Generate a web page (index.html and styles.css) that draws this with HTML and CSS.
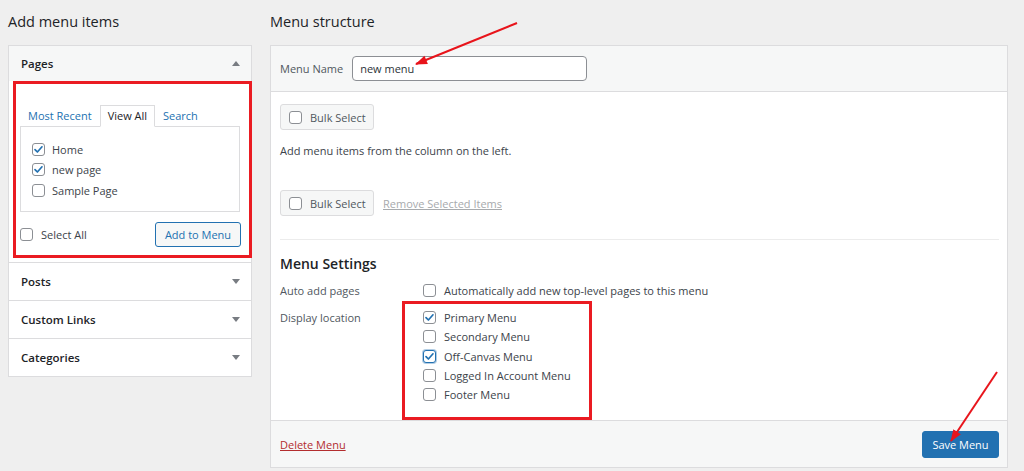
FILE: index.html
```html
<!DOCTYPE html>
<html lang="en">
<head>
<meta charset="utf-8">
<title>Menus</title>
<link rel="stylesheet" href="styles.css">
</head>
<body>
<div class="page">
  <div class="col-left">
    <h2 class="col-title">Add menu items</h2>
    <div class="accordion">
      <div class="acc-section open">
        <div class="acc-head"><span>Pages</span><span class="tri up"></span></div>
        <div class="acc-body highlight">
          <div class="tabs">
            <span class="tab">Most Recent</span>
            <span class="tab active">View All</span>
            <span class="tab">Search</span>
          </div>
          <div class="tab-panel">
            <div class="cb-row"><span class="cb checked"><svg viewBox="0 0 13 13"><path d="M3 6.6 L5.4 9 L10 3.8"/></svg></span>Home</div>
            <div class="cb-row"><span class="cb checked"><svg viewBox="0 0 13 13"><path d="M3 6.6 L5.4 9 L10 3.8"/></svg></span>new page</div>
            <div class="cb-row"><span class="cb"></span>Sample Page</div>
          </div>
          <div class="acc-actions">
            <div class="cb-row select-all"><span class="cb"></span>Select All</div>
            <button class="btn-secondary">Add to Menu</button>
          </div>
        </div>
      </div>
      <div class="acc-section"><div class="acc-head"><span>Posts</span><span class="tri down"></span></div></div>
      <div class="acc-section"><div class="acc-head"><span>Custom Links</span><span class="tri down"></span></div></div>
      <div class="acc-section"><div class="acc-head"><span>Categories</span><span class="tri down"></span></div></div>
    </div>
  </div>

  <div class="col-right">
    <h2 class="col-title">Menu structure</h2>
    <div class="menu-box">
      <div class="menu-header">
        <span class="name-label">Menu Name</span>
        <div class="name-input">new menu</div>
      </div>
      <div class="menu-body">
        <div class="bulk">
          <button class="bulk-btn"><span class="cb"></span>Bulk Select</button>
        </div>
        <p class="hint">Add menu items from the column on the left.</p>
        <div class="bulk bulk-2">
          <button class="bulk-btn"><span class="cb"></span>Bulk Select</button>
          <a class="remove">Remove Selected Items</a>
        </div>
        <div class="divider"></div>
        <h3 class="settings-title">Menu Settings</h3>
        <div class="setting-row auto">
          <span class="setting-label">Auto add pages</span>
          <div class="setting-value">
            <div class="cb-row wide"><span class="cb"></span>Automatically add new top-level pages to this menu</div>
          </div>
        </div>
        <div class="setting-row display">
          <span class="setting-label">Display location</span>
          <div class="setting-value locations highlight">
            <div class="loc-row"><span class="cb checked"><svg viewBox="0 0 13 13"><path d="M3 6.6 L5.4 9 L10 3.8"/></svg></span>Primary Menu</div>
            <div class="loc-row"><span class="cb"></span>Secondary Menu</div>
            <div class="loc-row"><span class="cb checked focus"><svg viewBox="0 0 13 13"><path d="M3 6.6 L5.4 9 L10 3.8"/></svg></span>Off-Canvas Menu</div>
            <div class="loc-row"><span class="cb"></span>Logged In Account Menu</div>
            <div class="loc-row"><span class="cb"></span>Footer Menu</div>
          </div>
        </div>
      </div>
      <div class="menu-footer">
        <a class="delete">Delete Menu</a>
        <button class="btn-primary">Save Menu</button>
      </div>
    </div>
  </div>

  <svg class="arrows" viewBox="0 0 1024 471" width="1024" height="471">
    <defs>
      <marker id="ah" viewBox="0 0 12 10" refX="11" refY="5" markerWidth="13" markerHeight="10" orient="auto" markerUnits="userSpaceOnUse">
        <path d="M0 0.5 L12 5 L0 9.5 z" fill="#e8141b"/>
      </marker>
    </defs>
    <line x1="517" y1="23" x2="416" y2="64" stroke="#e8141b" stroke-width="2" marker-end="url(#ah)"/>
    <line x1="997" y1="372" x2="951" y2="441" stroke="#e8141b" stroke-width="2" marker-end="url(#ah)"/>
  </svg>
</div>
</body>
</html>
```

FILE: styles.css
```css
html, body {
  margin: 0;
  padding: 0;
}

body {
  background: #efefef;
  font-family: "Open Sans", "Noto Sans", sans-serif;
  font-size: 11px;
  color: #3c434a;
}

.page {
  position: relative;
  display: flex;
  gap: 18px;
  padding: 0 16px 0 8px;
  height: 471px;
  box-sizing: border-box;
  overflow: hidden;
}

.col-left {
  width: 244px;
  flex: none;
}

.col-right {
  flex: 1;
  min-width: 0;
}

.col-title {
  font-size: 14.5px;
  font-weight: 400;
  color: #1d2327;
  line-height: 20px;
  margin: 12px 0 13px;
}

/* ---------- accordion ---------- */
.accordion {
  background: #fff;
  border: 1px solid #dcdcde;
}

.acc-head {
  display: flex;
  justify-content: space-between;
  align-items: center;
  box-sizing: border-box;
  height: 38px;
  padding: 0 11px 0 12px;
  font-weight: 600;
  font-size: 11.5px;
  color: #1d2327;
  border-top: 1px solid #dcdcde;
}

.acc-section.open .acc-head {
  height: 35px;
  background: #f6f7f7;
  border-top: 0;
}

.tri {
  width: 0;
  height: 0;
  border-left: 4px solid transparent;
  border-right: 4px solid transparent;
}

.tri.down {
  border-top: 5px solid #787c82;
}

.tri.up {
  border-bottom: 5px solid #787c82;
}

.highlight {
  border: 3px solid #ea1b22;
}

.acc-body {
  margin: 0 -1px 4px 4px;
  padding: 21px 8px 8px 4px;
}

.tabs {
  display: flex;
  margin-bottom: -1px;
  position: relative;
  z-index: 1;
}

.tab {
  padding: 0 7px;
  border: 1px solid transparent;
  line-height: 20px;
  color: #2271b1;
}

.tab.active {
  border-color: #dcdcde;
  border-bottom-color: #fff;
  background: #fff;
  color: #1d2327;
}

.tab-panel {
  border: 1px solid #dcdcde;
  padding: 12px 11px 10px;
  margin-right: 1px;
}

.cb-row {
  display: flex;
  align-items: center;
  gap: 7px;
  height: 20.5px;
  color: #3c434a;
  white-space: nowrap;
}

.cb {
  width: 13px;
  height: 13px;
  flex: none;
  box-sizing: border-box;
  border: 1px solid #8c8f94;
  border-radius: 3px;
  background: #fff;
  display: inline-flex;
  align-items: center;
  justify-content: center;
}

.cb svg {
  width: 13px;
  height: 13px;
  flex: none;
}

.cb svg path {
  fill: none;
  stroke: #2271b1;
  stroke-width: 1.7;
  stroke-linecap: round;
  stroke-linejoin: round;
}

.cb.focus {
  border-color: #2271b1;
  box-shadow: 0 0 0 1px rgba(34, 113, 177, 0.35);
}

.acc-actions {
  display: flex;
  justify-content: space-between;
  align-items: center;
  margin-top: 10px;
}

.select-all {
  gap: 8px;
}

.btn-secondary {
  width: 86px;
  height: 25px;
  box-sizing: border-box;
  border: 1px solid #2271b1;
  border-radius: 3px;
  background: #f6f7f7;
  color: #2271b1;
  font: inherit;
  padding: 0;
}

/* ---------- menu structure ---------- */
.menu-box {
  background: #fff;
  border: 1px solid #dcdcde;
}

.menu-header {
  height: 45px;
  display: flex;
  align-items: center;
  padding-left: 9px;
  background: #f6f7f7;
  border-bottom: 1px solid #dcdcde;
}

.name-label {
  color: #50575e;
  margin-right: 9px;
}

.name-input {
  width: 235px;
  height: 25px;
  box-sizing: border-box;
  border: 1px solid #8c8f94;
  border-radius: 4px;
  padding: 0 7px;
  line-height: 23px;
  color: #2c3338;
  background: #fff;
}

.menu-body {
  padding: 12px 8px 0 9px;
}

.bulk {
  display: flex;
  align-items: center;
  gap: 9px;
}

.bulk-btn {
  display: flex;
  align-items: center;
  gap: 8px;
  height: 26px;
  width: 94px;
  padding: 0 8px;
  box-sizing: border-box;
  border: 1px solid #dcdcde;
  border-radius: 3px;
  background: #f6f7f7;
  color: #50575e;
  font: inherit;
  white-space: nowrap;
}

.hint {
  margin: 11px 0 0;
  line-height: 19px;
}

.bulk-2 {
  margin-top: 30px;
}

.remove {
  color: #a7aaad;
  text-decoration: underline;
}

.divider {
  margin-top: 23px;
  border-top: 1px solid #ececec;
}

.settings-title {
  margin: 14px 0 0;
  font-size: 14px;
  font-weight: 600;
  line-height: 20px;
  color: #1d2327;
}

.setting-row {
  display: flex;
}

.setting-label {
  width: 122px;
  flex: none;
  color: #50575e;
}

.auto {
  margin-top: 6px;
  height: 20px;
  align-items: center;
}

.auto .setting-value {
  padding-left: 21px;
}

.wide {
  gap: 8px;
}

.display {
  margin-top: 1px;
  align-items: flex-start;
}

.display .setting-label {
  margin-top: 7px;
  line-height: 19.25px;
}

.locations {
  width: 190px;
  box-sizing: border-box;
  padding: 4px 0 12.75px 18px;
}

.loc-row {
  display: flex;
  align-items: center;
  gap: 8px;
  height: 19.25px;
}

.menu-footer {
  display: flex;
  justify-content: space-between;
  align-items: center;
  height: 46px;
  padding: 0 8px 0 9px;
  background: #f6f7f7;
  border-top: 1px solid #dcdcde;
}

.delete {
  color: #b32d2e;
  text-decoration: underline;
}

.btn-primary {
  width: 77px;
  height: 27px;
  padding: 0;
  background: #2271b1;
  color: #fff;
  border: 1px solid #2271b1;
  border-radius: 3px;
  font: inherit;
}

.arrows {
  position: absolute;
  top: 0;
  left: 0;
  pointer-events: none;
}
```
